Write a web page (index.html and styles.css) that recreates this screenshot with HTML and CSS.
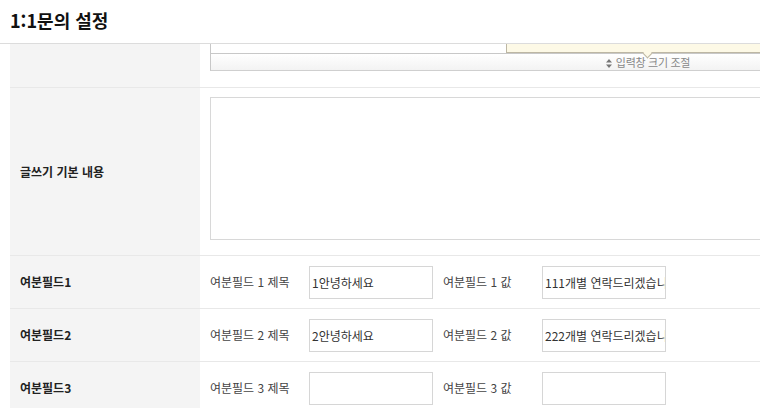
FILE: index.html
```html
<!DOCTYPE html>
<html lang="ko">
<head>
<meta charset="utf-8">
<link rel="stylesheet" href="styles.css">
</head>
<body>
<div class="page">
  <header class="header"><h1 class="title">1:1문의 설정</h1></header>
  <div class="tbl">
    <div class="row row-editor">
      <div class="th"></div>
      <div class="td td-editor">
        <div class="editor-tail"></div>
        <div class="resize-bar"><svg class="resize-icon" width="6" height="9" viewBox="0 0 6 9"><path d="M3 0 L6 3.5 L0 3.5 Z M3 9 L6 5.5 L0 5.5 Z" fill="#777"/></svg>입력창 크기 조절</div>
        <div class="tip"><span class="tip-arrow"></span></div>
      </div>
    </div>
    <div class="row row-text">
      <div class="th">글쓰기 기본 내용</div>
      <div class="td td-text"><div class="textarea"></div></div>
    </div>
    <div class="row">
      <div class="th">여분필드1</div>
      <div class="td td-fields">
        <span class="flabel">여분필드 1 제목</span><span class="input">1안녕하세요</span>
        <span class="flabel">여분필드 1 값</span><span class="input">111개별 연락드리겠습니</span>
      </div>
    </div>
    <div class="row">
      <div class="th">여분필드2</div>
      <div class="td td-fields">
        <span class="flabel">여분필드 2 제목</span><span class="input">2안녕하세요</span>
        <span class="flabel">여분필드 2 값</span><span class="input">222개별 연락드리겠습니</span>
      </div>
    </div>
    <div class="row">
      <div class="th">여분필드3</div>
      <div class="td td-fields">
        <span class="flabel">여분필드 3 제목</span><span class="input"></span>
        <span class="flabel">여분필드 3 값</span><span class="input"></span>
      </div>
    </div>
  </div>
</div>
</body>
</html>
```

FILE: styles.css
```css
html, body {
  margin: 0;
  padding: 0;
  background: #fff;
  overflow: hidden;
}
body {
  font-family: "Noto Sans CJK KR", "Noto Sans", sans-serif;
  font-size: 12px;
  color: #333;
  width: 760px;
  height: 408px;
}
.page {
  width: 760px;
  overflow: hidden;
}
.header {
  height: 43px;
  border-bottom: 1px solid #dcdcdc;
  padding-left: 10px;
  display: flex;
  align-items: center;
}
.title {
  margin: 0;
  font-size: 18px;
  font-weight: bold;
  color: #111;
  line-height: 20px;
  padding-bottom: 3px;
}
.tbl {
  margin-left: 10px;
  width: 1100px;
}
.row {
  display: grid;
  grid-template-columns: 190px 1fr;
  border-bottom: 1px solid #e8e8e8;
  height: 52px;
}
.th {
  background: #f4f4f4;
  padding-left: 10px;
  display: flex;
  align-items: center;
  font-weight: bold;
  color: #222;
  line-height: 16px;
}
.td {
  padding-left: 10px;
  position: relative;
}
.row-editor {
  height: 43px;
  overflow: hidden;
}
.editor-tail {
  width: 874px;
  height: 9px;
  border-left: 1px solid #c8c8c8;
  border-bottom: 1px solid #c8c8c8;
  background: #fff;
}
.resize-bar {
  width: 874px;
  height: 16px;
  border-left: 1px solid #c8c8c8;
  border-bottom: 1px solid #cfcfcf;
  background: linear-gradient(#ffffff, #f3f3f3);
  font-size: 11px;
  line-height: 16px;
  color: #888;
  text-align: center;
  letter-spacing: -0.3px;
}
.resize-icon {
  margin-right: 4px;
  vertical-align: -1px;
}
.tip {
  position: absolute;
  left: 306px;
  top: -20px;
  width: 500px;
  height: 28px;
  background: #fdf9e6;
  border-left: 1px solid #bdb7a4;
  border-bottom: 1px solid #bdb7a4;
}
.tip-arrow {
  position: absolute;
  left: 137px;
  bottom: -5px;
  width: 6px;
  height: 6px;
  background: #fdf9e6;
  border-right: 1px solid #bdb7a4;
  border-bottom: 1px solid #bdb7a4;
  transform: rotate(45deg);
}
.row-text {
  height: 167px;
}
.td-text {
  padding-top: 9px;
}
.textarea {
  width: 874px;
  height: 141px;
  border: 1px solid #d8d8d8;
  background: #fff;
}
.td-fields {
  display: flex;
  align-items: center;
}
.flabel {
  width: 99px;
  flex: none;
  color: #444;
  line-height: 16px;
}
.input {
  width: 120px;
  height: 31px;
  border: 1px solid #d6d6d6;
  flex: none;
  margin-right: 10px;
  padding-left: 2px;
  line-height: 31px;
  white-space: nowrap;
  overflow: hidden;
  color: #333;
}
```
